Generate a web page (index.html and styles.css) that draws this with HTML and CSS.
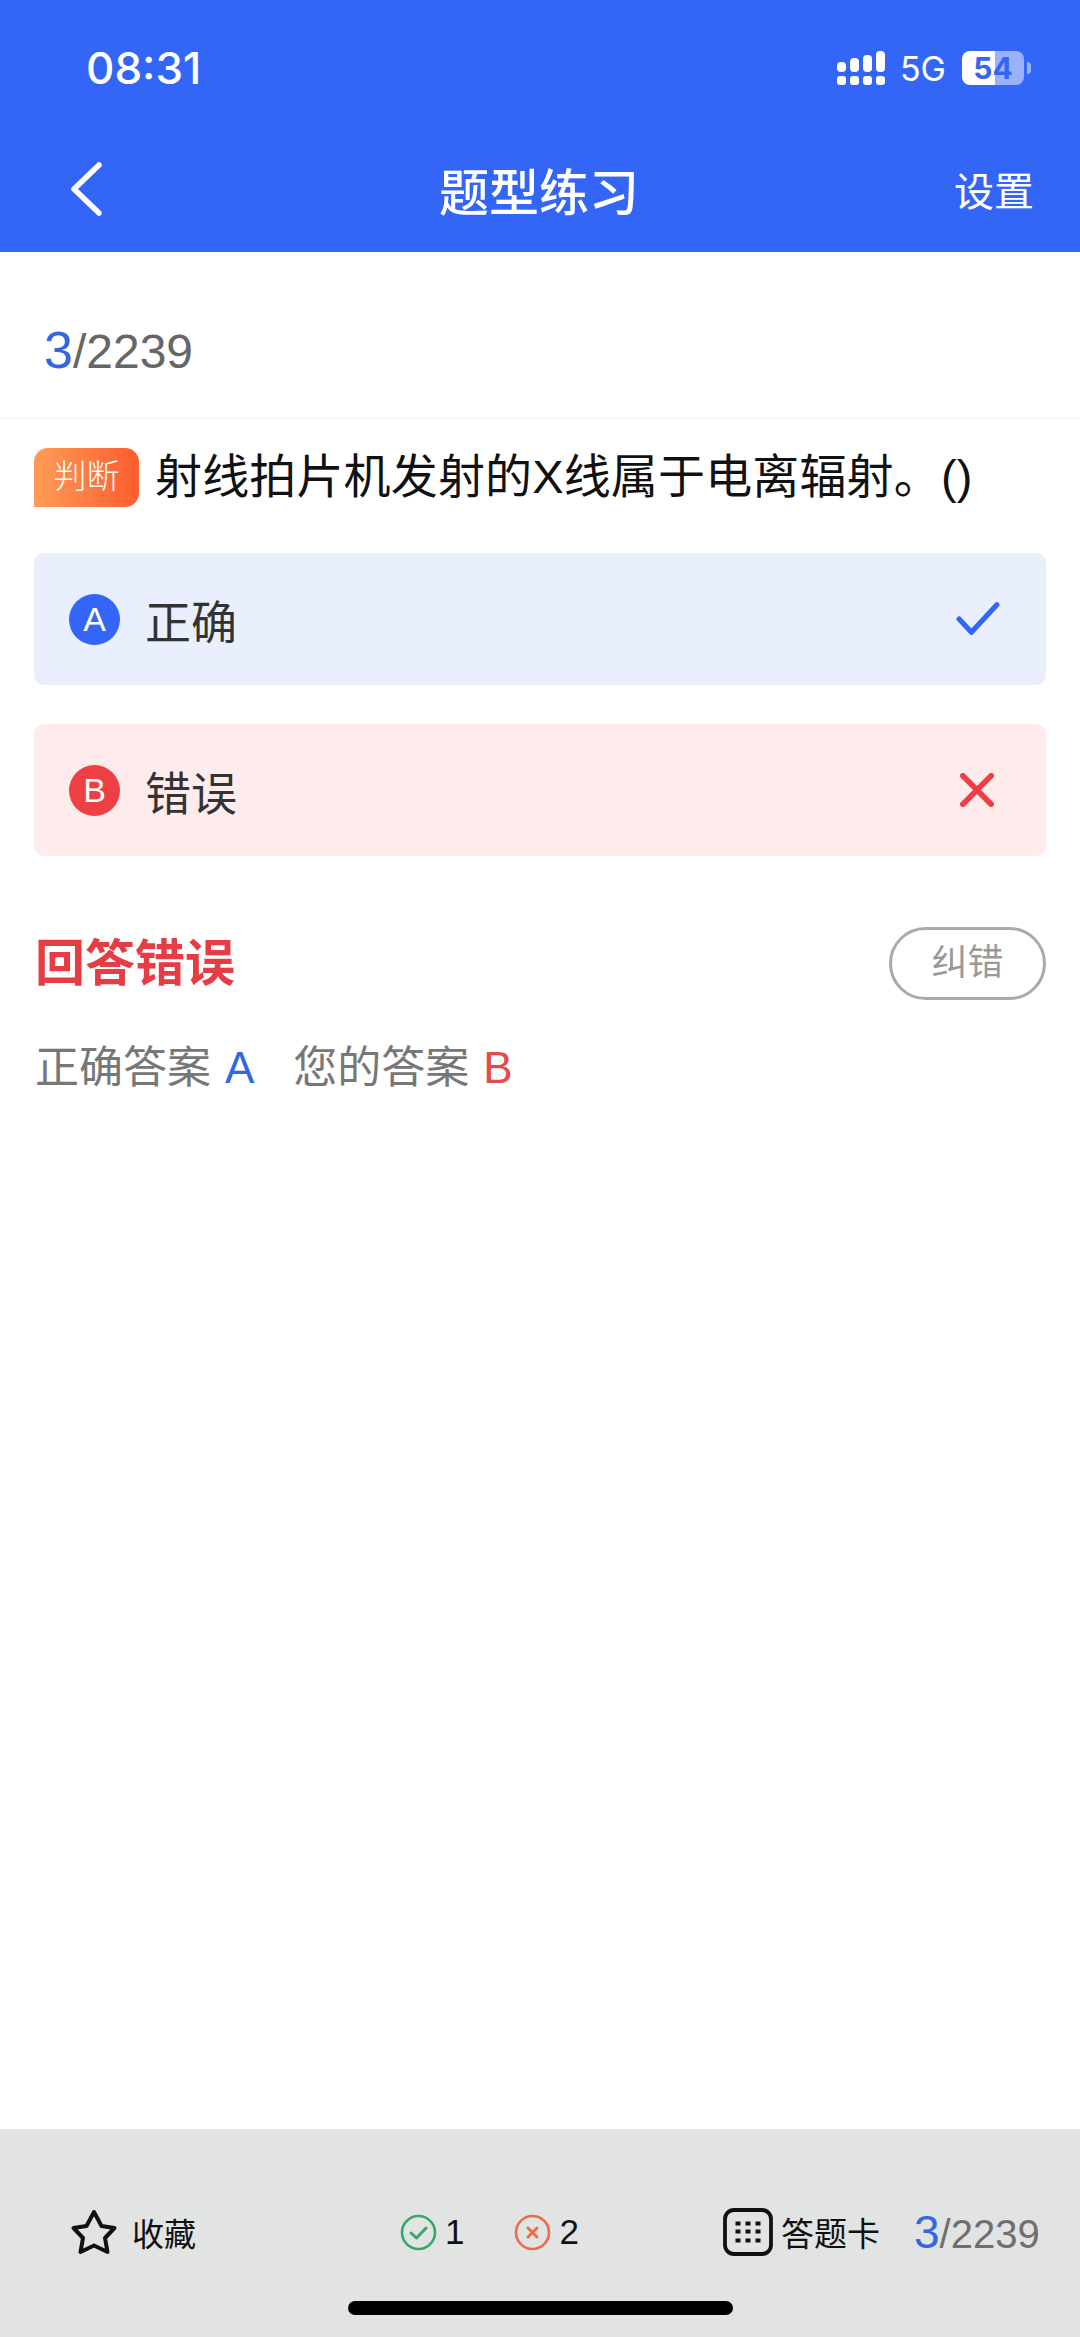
FILE: index.html
```html
<!DOCTYPE html>
<html lang="zh-CN">
<head>
    <meta charset="UTF-8">
    <meta name="viewport" content="width=device-width, initial-scale=1.0">
    <title>题型练习</title>
    <link rel="stylesheet" href="styles.css">
</head>
<body>
    <div class="page">
        <header class="header">
            <div class="status-bar">
                <span class="time">08:31</span>
                <div class="status-right">
                    <svg class="signal" width="48" height="34" viewBox="0 0 48 34" fill="#fff">
                        <rect x="0" y="11" width="9" height="10" rx="4"/>
                        <rect x="13" y="7" width="9" height="14" rx="4"/>
                        <rect x="26" y="4" width="9" height="17" rx="4"/>
                        <rect x="39" y="0" width="9" height="21" rx="4"/>
                        <rect x="0" y="25" width="9" height="9" rx="3"/>
                        <rect x="13" y="25" width="9" height="9" rx="3"/>
                        <rect x="26" y="25" width="9" height="9" rx="3"/>
                        <rect x="39" y="25" width="9" height="9" rx="3"/>
                    </svg>
                    <span class="network">5G</span>
                    <div class="battery"><span>54</span></div>
                    <i class="battery-tip"></i>
                </div>
            </div>
            <nav class="nav">
                <div class="nav-side nav-back">
                    <svg width="32" height="54" viewBox="0 0 32 54" fill="none" stroke="#fff" stroke-width="5.5" stroke-linecap="round" stroke-linejoin="round">
                        <path d="M29 3 L4 27 L29 51"/>
                    </svg>
                </div>
                <h1 class="nav-title">题型练习</h1>
                <div class="nav-side nav-action">设置</div>
            </nav>
        </header>

        <div class="progress">
            <span class="progress-now">3</span><span class="progress-total">/2239</span>
        </div>

        <main class="content">
            <div class="question">
                <span class="tag">判断</span>
                <span class="question-text">射线拍片机发射的X线属于电离辐射。()</span>
            </div>

            <div class="option option-right">
                <span class="option-letter">A</span>
                <span class="option-text">正确</span>
                <svg width="44" height="34" viewBox="0 0 46 36" fill="none" stroke="#3366f6" stroke-width="5.5" stroke-linecap="round" stroke-linejoin="round">
                    <path d="M3 18 L16 32 L43 3"/>
                </svg>
            </div>
            <div class="option option-wrong">
                <span class="option-letter">B</span>
                <span class="option-text">错误</span>
                <svg class="wrong-mark" width="34" height="34" viewBox="0 0 36 36" fill="none" stroke="#ee3f45" stroke-width="6" stroke-linecap="round">
                    <path d="M3 3 L33 33 M33 3 L3 33"/>
                </svg>
            </div>

            <div class="result">
                <span class="result-title">回答错误</span>
                <span class="report-btn">纠错</span>
            </div>
            <p class="answers">
                <span>正确答案</span><b class="blue">A</b>
                <span class="answers-mine">您的答案</span><b class="red">B</b>
            </p>
        </main>

        <footer class="toolbar">
            <div class="tool tool-fav">
                <svg width="48" height="48" viewBox="0 0 48 48" fill="none" stroke="#111" stroke-width="4" stroke-linejoin="round">
                    <path d="M24 4 L31.5 18 L44.5 20 L35 30 L37.5 44 L24 37.5 L10.5 44 L13 30 L3.5 20 L16.5 18 Z"/>
                </svg>
                <span>收藏</span>
            </div>
            <div class="tool tool-count">
                <svg width="37" height="37" viewBox="0 0 37 37" fill="none" stroke="#34a867" stroke-width="2.6" stroke-linecap="round" stroke-linejoin="round">
                    <circle cx="18.5" cy="18.5" r="16.5"/>
                    <path d="M11 19 L16.5 24 L26 14" stroke-width="3"/>
                </svg>
                <span class="count">1</span>
            </div>
            <div class="tool tool-count tool-count-wrong">
                <svg width="37" height="37" viewBox="0 0 37 37" fill="none" stroke="#ee6a4a" stroke-width="2.6" stroke-linecap="round">
                    <circle cx="18.5" cy="18.5" r="16.5"/>
                    <path d="M14 14 L23 23 M23 14 L14 23" stroke-width="3"/>
                </svg>
                <span class="count">2</span>
            </div>
            <div class="tool tool-card">
                <svg width="50" height="48" viewBox="0 0 50 48" fill="#111">
                    <rect x="2" y="2" width="46" height="44" rx="9" fill="none" stroke="#111" stroke-width="3.8"/>
                    <rect x="12.5" y="13.5" width="5" height="4"/><rect x="22.5" y="13.5" width="5" height="4"/><rect x="32.5" y="13.5" width="5" height="4"/>
                    <rect x="12.5" y="21.5" width="5" height="4"/><rect x="22.5" y="21.5" width="5" height="4"/><rect x="32.5" y="21.5" width="5" height="4"/>
                    <rect x="12.5" y="30.5" width="5" height="4"/><rect x="22.5" y="30.5" width="5" height="4"/><rect x="32.5" y="30.5" width="5" height="4"/>
                </svg>
                <span>答题卡</span>
            </div>
            <div class="tool-progress">
                <span class="tool-now">3</span><span class="tool-total">/2239</span>
            </div>
            <div class="home-bar"></div>
        </footer>
    </div>
</body>
</html>
```

FILE: styles.css
```css
* {
    box-sizing: border-box;
}

body {
    margin: 0;
    background: #fff;
    font-family: "Liberation Sans", "Noto Sans CJK SC", sans-serif;
}

.page {
    width: 1080px;
    height: 2337px;
    display: flex;
    flex-direction: column;
    overflow: hidden;
}

/* 顶部蓝色区域 */
.header {
    height: 252px;
    background: #3366f6;
    color: #fff;
}

.status-bar {
    height: 136px;
    padding: 0 49px 0 86px;
    display: flex;
    justify-content: space-between;
    align-items: center;
}

.time {
    font-family: Inter, sans-serif;
    font-size: 44px;
    font-weight: 500;
}

.status-right {
    display: flex;
    align-items: center;
}

.signal {
    display: block;
}

.network {
    margin-left: 15px;
    font-family: Inter, sans-serif;
    font-size: 34px;
}

.battery {
    width: 62px;
    height: 34px;
    margin-left: 16px;
    border-radius: 8px;
    background: linear-gradient(to right, #fff 53%, rgba(255, 255, 255, 0.5) 53%);
    color: #3366f6;
    font-family: Inter, sans-serif;
    font-size: 30px;
    font-weight: 700;
    line-height: 34px;
    text-align: center;
}

.battery-tip {
    width: 4px;
    height: 12px;
    margin-left: 3px;
    border-radius: 0 4px 4px 0;
    background: rgba(255, 255, 255, 0.5);
}

.nav {
    height: 116px;
    padding: 0 46px 10px 70px;
    display: flex;
    justify-content: space-between;
    align-items: center;
}

.nav-side {
    display: flex;
}

.nav-back {
    width: 94px;
}

.nav-action {
    width: 120px;
    justify-content: flex-end;
    font-size: 40px;
}

.nav-title {
    margin: 0;
    font-size: 50px;
    font-weight: 500;
}

/* 题号 */
.progress {
    height: 167px;
    padding-left: 44px;
    padding-top: 68px;
    border-bottom: 1px solid #f2f2f2;
    line-height: 60px;
}

.progress-now {
    color: #3366e0;
    font-size: 52px;
}

.progress-total {
    color: #666;
    font-size: 48px;
}

.content {
    flex: 1;
    padding: 29px 34px 0;
}

.question {
    display: flex;
    align-items: flex-start;
    height: 60px;
}

.tag {
    width: 105px;
    height: 59px;
    margin-right: 16px;
    border-radius: 14px 14px 14px 0;
    background: linear-gradient(to right, #fd9b57, #fd5d2e);
    color: #fff;
    font-size: 33px;
    font-weight: 300;
    line-height: 57px;
    text-align: center;
}

.question-text {
    color: #111;
    font-size: 47px;
    line-height: 58px;
    letter-spacing: 0.15px;
    white-space: nowrap;
}

.option {
    height: 132px;
    margin-top: 39px;
    padding: 0 46px 0 35px;
    border-radius: 10px;
    display: flex;
    align-items: center;
}

.question + .option {
    margin-top: 45px;
}

.option-right {
    background: #e9effd;
}

.option-wrong {
    background: #fdeceb;
}

.wrong-mark {
    margin-right: 6px;
}

.option-letter {
    width: 51px;
    height: 51px;
    border-radius: 50%;
    color: #fff;
    font-size: 34px;
    line-height: 51px;
    text-align: center;
}

.option-right .option-letter {
    background: #3366f6;
}

.option-wrong .option-letter {
    background: #ee3f45;
}

.option-text {
    flex: 1;
    margin-left: 25px;
    color: #333;
    font-size: 46px;
}

.result {
    margin-top: 71px;
    display: flex;
    justify-content: space-between;
    align-items: center;
}

.result-title {
    margin-left: 1px;
    color: #e63c44;
    font-size: 50px;
    font-weight: 700;
    line-height: 60px;
}

.report-btn {
    width: 157px;
    height: 73px;
    border: 3px solid #aaa;
    border-radius: 37px;
    color: #999;
    font-size: 36px;
    line-height: 66px;
    text-align: center;
}

.answers {
    margin: 38px 0 0 1px;
    color: #777;
    font-size: 44px;
    line-height: 60px;
    white-space: nowrap;
}

.answers b {
    margin-left: 14px;
    font-weight: 400;
}

.answers-mine {
    margin-left: 29px;
}

.blue {
    color: #3366e0;
}

.red {
    color: #e64a4a;
}

/* 底部工具栏 */
.toolbar {
    position: relative;
    height: 208px;
    padding: 0 0 2px 70px;
    background: #e2e3e3;
    display: flex;
    align-items: center;
    color: #111;
}

.tool {
    flex: none;
    display: flex;
    align-items: center;
    font-size: 32px;
    white-space: nowrap;
}

.tool-fav span {
    margin-left: 14px;
}

.tool-count {
    margin-left: 50px;
}

.tool-fav + .tool-count {
    margin-left: 204px;
}

.count {
    margin-left: 8px;
    font-size: 35px;
}

.tool-card {
    margin-left: 144px;
}

.tool-card span {
    margin-left: 8px;
    font-size: 33px;
}

.tool-progress {
    flex: none;
    margin-left: 34px;
    white-space: nowrap;
}

.tool-now {
    color: #3366e0;
    font-size: 46px;
}

.tool-total {
    color: #6f6f6f;
    font-size: 40px;
}

.home-bar {
    position: absolute;
    left: 348px;
    bottom: 22px;
    width: 385px;
    height: 14px;
    border-radius: 7px;
    background: #000;
}
```
